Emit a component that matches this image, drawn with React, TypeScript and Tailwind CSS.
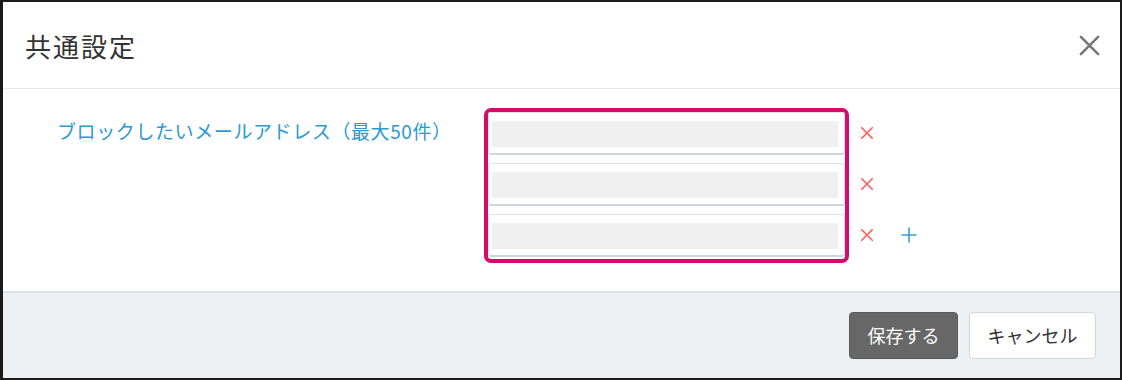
const jp = "font-['Noto_Sans_CJK_JP','Noto_Sans',sans-serif]";

const CrossIcon = ({ className }: { className: string }) => (
  <svg viewBox="0 0 16 16" className={className} fill="none" stroke="currentColor" strokeWidth="1.8" strokeLinecap="round">
    <path d="M2 2 L14 14 M14 2 L2 14" />
  </svg>
);

const PlusIcon = () => (
  <svg viewBox="0 0 16 16" className="w-4 h-4 text-[#3a9fd0]" fill="none" stroke="currentColor" strokeWidth="1.6">
    <path d="M8 0.5 V15.5 M0.5 8 H15.5" />
  </svg>
);

const EmailInput = () => (
  <div className="h-[43px] rounded-[3px] border border-[#dde2e8] border-b-2 border-b-[#cfd6de] bg-white pl-[3px] pr-[6px] py-[8px]">
    <div className="h-[26px] bg-[#f0f0f0]" />
  </div>
);

const App = () => {
  const rows = [0, 1, 2];

  return (
    <div className={`w-[1122px] h-[380px] bg-white border-2 border-l-[3px] border-[#1a1a1a] flex flex-col ${jp}`}>
      {/* header */}
      <div className="h-[87px] shrink-0 flex items-center justify-between pl-[22px] pr-[19px] border-b border-[#e2e7ec]">
        <h1 className="text-[26px] text-[#333] tracking-[2px]">共通設定</h1>
        <CrossIcon className="w-[23px] h-[23px] text-[#777]" />
      </div>

      {/* body */}
      <div className="flex-1 flex pt-[19px]">
        <div className="w-[481px] shrink-0 pl-[54px] pt-[10px]">
          <span className="text-[19px] leading-[26px] tracking-[0.6px] text-[#2a9ad0]">ブロックしたいメールアドレス（最大50件）</span>
        </div>
        <div className="flex items-start">
          <div className="w-[365px] h-[155px] border-4 border-[#d50b6b] rounded-[7px] flex flex-col gap-[8px]">
            {rows.map((r) => (
              <EmailInput key={r} />
            ))}
          </div>
          <div className="flex flex-col pt-[17px] gap-[36px] pl-[11px]">
            {rows.map((r) => (
              <div key={r} className="flex items-center h-[15px]">
                <CrossIcon className="w-[14px] h-[14px] text-[#ff5757]" />
                {r === 2 && (
                  <div className="ml-[27px]">
                    <PlusIcon />
                  </div>
                )}
              </div>
            ))}
          </div>
        </div>
      </div>

      {/* footer */}
      <div className="h-[87px] shrink-0 bg-[#eef1f4] border-t-2 border-[#dde2e7] flex items-center justify-end gap-[11px] pr-[24px]">
        <button className="w-[109px] h-[47px] rounded-[4px] bg-[#676767] border border-[#5a5a5a] text-white text-[18px]">保存する</button>
        <button className="w-[127px] h-[47px] rounded-[4px] bg-white border border-[#d2d6db] text-[#333] text-[18px]">キャンセル</button>
      </div>
    </div>
  );
};

export default App;
